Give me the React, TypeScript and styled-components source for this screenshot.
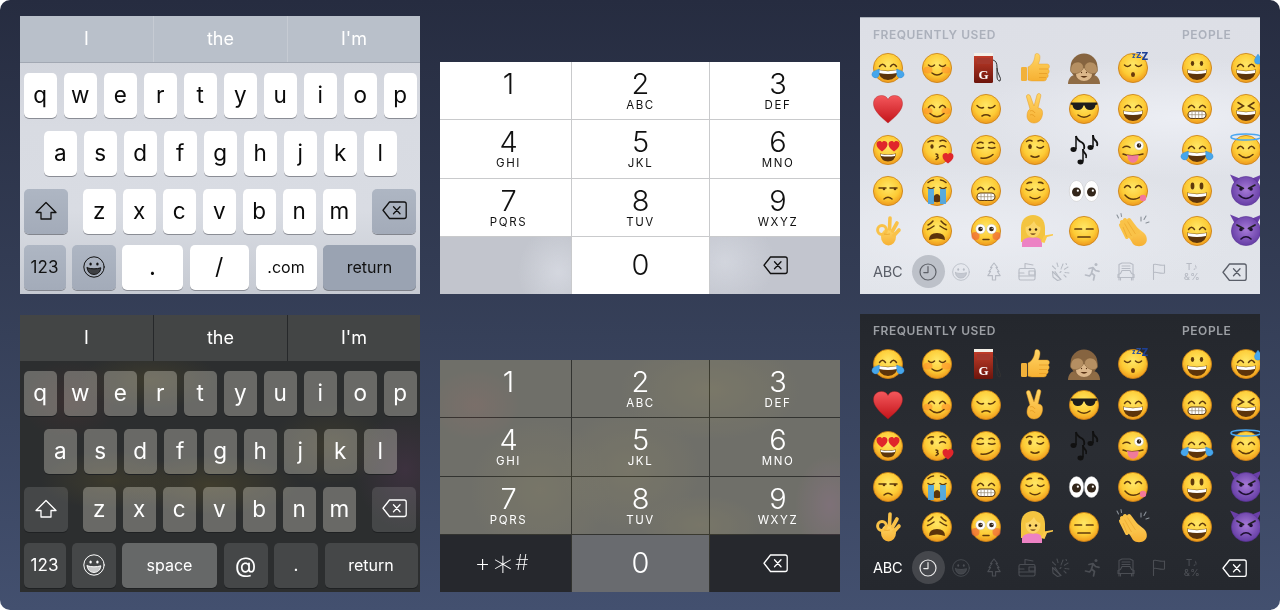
import React from 'react';
import styled, { createGlobalStyle } from 'styled-components';

const Global = createGlobalStyle`
  html, body { margin: 0; padding: 0; background: #fff; }
  body { font-family: Inter, "Liberation Sans", sans-serif; }
`;

const Page = styled.div`
  width: 1280px;
  height: 610px;
  box-sizing: border-box;
  border-radius: 10px;
  overflow: hidden;
  padding: 16px 20px 0;
  background: linear-gradient(180deg, #262c40 0%, #364059 55%, #43506f 100%);
  display: grid;
  grid-template-columns: 400px 400px 400px;
  grid-template-rows: 278px 277px;
  column-gap: 20px;
  row-gap: 21px;
`;

const Keyboard = styled.div<{ $dark?: boolean }>`
  display: flex;
  flex-direction: column;
  filter: blur(0.4px);
  background: ${p => p.$dark
    ? `radial-gradient(ellipse 50px 40px at 50px 85px, rgba(110,50,50,.2), transparent),
       radial-gradient(ellipse 70px 30px at 90px 165px, rgba(110,95,40,.25), transparent),
       radial-gradient(ellipse 90px 30px at 190px 170px, rgba(110,95,40,.3), transparent),
       radial-gradient(ellipse 50px 60px at 385px 155px, rgba(110,60,110,.25), transparent),
       radial-gradient(ellipse 70px 30px at 130px 65px, rgba(110,95,40,.25), transparent),
       radial-gradient(ellipse 60px 40px at 310px 130px, rgba(110,95,40,.22), transparent),
       #2c2e2f`
    : `linear-gradient(180deg, #ced1d9 0%, #d8dbe2 40%, #d9dce3 70%, #c6cad2 100%)`};
`;

const Suggestions = styled.div<{ $dark?: boolean }>`
  display: grid;
  grid-template-columns: 133px 134px 133px;
  height: ${p => (p.$dark ? 46 : 47)}px;
  box-sizing: border-box;
  border-bottom: ${p => (p.$dark ? 'none' : '1px solid #a2a8b3')};
  background: ${p => (p.$dark ? '#434545' : '#b9c0ca')};
`;

const Suggestion = styled.div<{ $dark?: boolean }>`
  display: flex;
  align-items: center;
  justify-content: center;
  font-size: 18px;
  padding-bottom: 1px;
  color: #fff;
  &:not(:first-child) { border-left: 1px solid ${p => (p.$dark ? '#26282a' : '#c6cbd3')}; }
`;

const Keys = styled.div`
  display: flex;
  flex-direction: column;
  gap: 13px;
  padding: 10px 4px 0 3.5px;
`;

const Row = styled.div<{ $indent?: number; $tight?: boolean }>`
  display: flex;
  height: 45px;
  gap: 6.5px;
  padding-left: ${p => p.$indent ?? 0}px;
  margin-top: ${p => (p.$tight ? -2 : 0)}px;
`;

const Key = styled.div<{ $w?: number; $tone: string; $size?: number; $after?: number; $push?: boolean }>`
  width: ${p => p.$w ?? 33.5}px;
  flex: none;
  height: 45px;
  box-sizing: border-box;
  border-radius: 5px;
  display: flex;
  align-items: center;
  justify-content: center;
  font-size: ${p => p.$size ?? 22.5}px;
  padding-bottom: 2px;
  margin-right: ${p => p.$after ?? 0}px;
  margin-left: ${p => (p.$push ? 'auto' : 0)};
  ${p => {
    switch (p.$tone) {
      case 'white': return 'background:#fff;color:#0a0a0a;box-shadow:0 1px 0 #8a8d95;';
      case 'gray': return 'background:linear-gradient(180deg,#aeb6c3,#a3abb9);color:#111;box-shadow:0 1px 0 #82858d;';
      case 'gray2': return 'background:#9aa3b2;color:#111;box-shadow:0 1px 0 #7d8088;';
      case 'dim': return 'background:rgba(255,252,238,.29);color:#fff;box-shadow:0 1px 0 #1f2123;';
      case 'dark': return 'background:rgba(255,255,255,.12);color:#fff;box-shadow:0 1px 0 #1f2123;';
      case 'space': return 'background:rgba(255,255,255,.28);color:#fff;box-shadow:0 1px 0 #1f2123;';
      default: return '';
    }
  }}
`;

const Numpad = styled.div<{ $dark?: boolean }>`
  align-self: end;
  height: 232px;
  filter: blur(0.4px);
  display: grid;
  grid-template-columns: 131px 137px 130px;
  grid-template-rows: repeat(4, 1fr);
  gap: 1px;
  background: ${p => p.$dark
    ? `radial-gradient(ellipse 45px 35px at 35px 45px, rgba(120,50,50,.22), transparent),
       radial-gradient(ellipse 70px 70px at 100px 130px, rgba(110,100,40,.2), transparent),
       radial-gradient(ellipse 90px 50px at 270px 30px, rgba(110,100,40,.24), transparent),
       radial-gradient(ellipse 70px 60px at 190px 110px, rgba(110,100,40,.2), transparent),
       radial-gradient(ellipse 35px 50px at 390px 145px, rgba(120,60,120,.3), transparent),
       radial-gradient(ellipse 60px 30px at 260px 165px, rgba(110,100,40,.2), transparent),
       #323330`
    : '#c9cacc'};
`;

const Pad = styled.div<{ $tone: string; $shift?: boolean; $center?: boolean }>`
  display: flex;
  flex-direction: column;
  align-items: center;
  box-sizing: border-box;
  justify-content: ${p => (p.$center ? 'center' : 'flex-start')};
  padding: ${p => (p.$center ? '0' : '6px')} 0 0 ${p => (p.$shift ? 6 : 0)}px;
  ${p => {
    switch (p.$tone) {
      case 'white': return 'background:#fff;color:#111;';
      case 'sideL': return 'background:radial-gradient(ellipse 40px 45px at 118px 35px,#d4d7df,transparent),#c2c5cd;color:#111;';
      case 'sideR': return 'background:radial-gradient(ellipse 50px 45px at 15px 25px,#d2d5dd,transparent),#c2c5ce;color:#111;';
      case 'dim': return 'background:rgba(255,252,238,.3);color:#fff;';
      case 'black': return 'background:#26282d;color:#fff;';
      case 'zero': return 'background:#696b6f;color:#fff;';
      default: return '';
    }
  }}
`;

const Digit = styled.div`
  font-size: 29px;
  line-height: 32px;
  font-weight: 340;
`;

const Letters = styled.div`
  font-size: 11.5px;
  line-height: 11px;
  letter-spacing: 1.6px;
`;

const Symbols = styled.div`
  display: flex;
  align-items: center;
  gap: 6px;
  margin-right: 8px;
  font-weight: 200;
  line-height: 24px;
`;

const Sym = styled.span<{ $size: number; $scale?: number; $font?: string }>`
  display: inline-block;
  font-size: ${p => p.$size}px;
  transform: scale(${p => p.$scale ?? 1});
  font-family: ${p => p.$font ?? 'Inter'}, sans-serif;
`;

const EmojiPanel = styled.div<{ $dark?: boolean }>`
  overflow: hidden;
  display: flex;
  flex-direction: column;
  filter: blur(0.4px);
  margin-top: ${p => (p.$dark ? -1 : 1)}px;
  height: ${p => (p.$dark ? 276 : 277)}px;
  border-top: ${p => (p.$dark ? 'none' : '1px solid #aab0ba')};
  box-sizing: border-box;
  background: ${p => p.$dark
    ? 'linear-gradient(180deg,#24272d 0%,#2a2d33 50%,#25282e 100%)'
    : 'radial-gradient(ellipse 220px 60px at 320px 100px,#eceef4,transparent),radial-gradient(ellipse 260px 70px at 120px 215px,#eaecf2,transparent),linear-gradient(180deg,#dddfe6 0%,#e1e4ea 100%)'};
`;

const tracks = 'repeat(5, 49px) 64px 49px 49px';

const SectionLabels = styled.div<{ $dark?: boolean }>`
  display: grid;
  grid-template-columns: ${tracks};
  padding: 9px 0 0 13px;
  height: 26px;
  box-sizing: border-box;
  font-size: 12px;
  line-height: 16px;
  font-weight: 600;
  letter-spacing: 0.55px;
  color: ${p => (p.$dark ? '#9c9fa4' : '#abb0bb')};
`;

const FirstLabel = styled.span`
  grid-column: span 6;
`;

const SecondLabel = styled.span`
  grid-column: span 2;
`;

const EmojiGrid = styled.div`
  display: grid;
  grid-template-columns: ${tracks};
  grid-auto-rows: 40.75px;
  padding: 4px 0 0 13px;
  align-items: center;
`;

const EmojiIcon = styled.svg`
  display: block;
  width: 30px;
  height: 30px;
  overflow: visible;
`;

const CategoryBar = styled.div<{ $dark?: boolean }>`
  display: flex;
  align-items: center;
  margin-top: 3px;
  padding: 0 13px;
  height: 34px;
  color: ${p => (p.$dark ? '#fff' : '#5a5e68')};
`;

const Abc = styled.div`
  width: 38.5px;
  flex: none;
  font-size: 14.5px;
  letter-spacing: -0.2px;
`;

const Category = styled.div<{ $dark?: boolean; $on?: boolean }>`
  width: 33px;
  height: 33px;
  flex: none;
  display: flex;
  align-items: center;
  justify-content: center;
  border-radius: 50%;
  box-sizing: border-box;
  color: ${p => (p.$on ? (p.$dark ? '#e8e8e8' : '#5e6168') : p.$dark ? '#4b4e54' : '#b7bbc4')};
  background: ${p => (p.$on ? (p.$dark ? '#45474c' : '#bdc1c9') : 'transparent')};
`;

const SymbolGlyph = styled.div`
  font-size: 9.5px;
  line-height: 9.5px;
  font-weight: 500;
  text-align: center;
  letter-spacing: 0.4px;
`;

const DeleteSlot = styled.div`
  margin-left: auto;
  display: flex;
`;

const Svg = styled.svg`
  display: block;
  fill: none;
  stroke: currentColor;
  stroke-linejoin: round;
  stroke-linecap: round;
`;

const Defs = styled.svg`
  display: block;
  width: 0;
  height: 0;
`;

const Del = () => (
  <Svg width={25} height={18.5} viewBox="0 0 25 18.5" strokeWidth={1.3}>
    <path d="M7.5 1h14.7a2 2 0 0 1 2 2v12.5a2 2 0 0 1-2 2H7.5L1 9.25z" />
    <path d="M11.5 5.7l6.5 7M18 5.7l-6.5 7" />
  </Svg>
);

const Shift = () => (
  <Svg width={22} height={20} viewBox="0 0 22 20" strokeWidth={1.3}>
    <path d="M11 1.500L21 11.500H16V18H6V11.500H1z" />
  </Svg>
);

const SmileyIcon = ({ d = 22 }: { d?: number }) => (
  <Svg width={d} height={d} viewBox="0 0 22 22" strokeWidth={1}>
    <circle cx="11" cy="11" r="10.2" />
    <ellipse cx="7.600" cy="8" rx="1.200" ry="1.600" fill="currentColor" stroke="none" />
    <ellipse cx="14.400" cy="8" rx="1.200" ry="1.600" fill="currentColor" stroke="none" />
    <path d="M4.200 11.800c4 1.400 9.600 1.400 13.600 0c-.4 4.600-3.400 6.600-6.800 6.600s-6.400-2-6.800-6.600z" fill="currentColor" fillOpacity=".7" />
  </Svg>
);

const CatIcon: Record<string, React.ReactNode> = {
  clock: (
    <Svg width={18} height={18} viewBox="0 0 18 18" strokeWidth={1.2}>
      <circle cx="9" cy="9" r="8" />
      <path d="M9 3.500V9.600H4.800" />
    </Svg>
  ),
  smile: <SmileyIcon d={18} />,
  tree: (
    <Svg width={14} height={19} viewBox="0 0 14 19" strokeWidth={1.1}>
      <path d="M7 1L10.500 5.500H9L12 9.500H10.400L13.200 13.600H8.600V18H5.400V13.600H.8L3.600 9.500H2L5 5.500H3.500z" />
    </Svg>
  ),
  cable: (
    <Svg width={18} height={19} viewBox="0 0 18 19" strokeWidth={1.1}>
      <path d="M7 6.500V1.500L15 3" />
      <rect x="1" y="6.500" width="16" height="11.500" rx="1.500" />
      <path d="M1 11h5M11 9h6v4h-6z" />
      <path d="M1 14h16" />
    </Svg>
  ),
  party: (
    <Svg width={19} height={19} viewBox="0 0 19 19" strokeWidth={1.1}>
      <path d="M1.500 9.500l8.500 8L6.500 18.500 2 15z" />
      <path d="M4 9.500l5.500 8M1.500 4l3 3M6 1l1 3.500M12 2l-2 5M17 5l-4 2.500M18 11l-4-.5M15 15l-2-2M15 1.500l.5 1M9 10.500l1-1" strokeDasharray="1.600 1" />
    </Svg>
  ),
  run: (
    <Svg width={18} height={19} viewBox="0 0 18 19" strokeWidth={1.7}>
      <circle cx="12" cy="2.500" r="1.500" fill="currentColor" stroke="none" />
      <path d="M5 6.500l4-1 2.500 3 3.500.8M9 6l-1.500 5 3 2.500-1 4.500M7.500 11.500L5.500 14 1.500 13" />
    </Svg>
  ),
  car: (
    <Svg width={18} height={19} viewBox="0 0 18 19" strokeWidth={1.1}>
      <path d="M2 18V2.500L5 1h8l3 1.500V18" />
      <path d="M5 4h8M5 6.500h8" />
      <path d="M1 15.500v-3l2.500-1 1.500-3h8l1.500 3 2.500 1v3z" />
      <path d="M3.500 15.500V18M14.500 15.500V18" />
    </Svg>
  ),
  flag: (
    <Svg width={14} height={17} viewBox="0 0 14 17" strokeWidth={1.1}>
      <path d="M1.500 16.500V1.500c3.500-1 6 1.500 11 .5V10c-5 1-7.500-1.500-11-.5" />
    </Svg>
  ),
};

const Face: React.FC<{ children?: React.ReactNode }> = ({ children }) => (
  <>
    <circle cx="15" cy="15" r="14.600" fill="url(#fg)" stroke="#c97f14" strokeWidth=".8" />
    {children}
  </>
);

const BR = '#5f3a0c';
const line = { fill: 'none', stroke: BR, strokeWidth: 1.5, strokeLinecap: 'round' as const };
const eyesUp = <path {...line} d="M6.500 13.500q3-4.500 6 0M17.500 13.500q3-4.500 6 0" />;
const eyesClosed = <path {...line} d="M6.500 12q3 3 6 0M17.500 12q3 3 6 0" />;
const eyesSad = <path {...line} d="M6 11.500q3 3.500 6.500 2M24 11.500q-3 3.500-6.500 2" />;
const eyesDots = (
  <>
    <ellipse cx="10.500" cy="10.500" rx="1.700" ry="2.400" fill={BR} />
    <ellipse cx="19.500" cy="10.500" rx="1.700" ry="2.400" fill={BR} />
  </>
);
const eyesTall = (
  <>
    <ellipse cx="10.500" cy="10" rx="1.900" ry="3.400" fill={BR} />
    <ellipse cx="19.500" cy="10" rx="1.900" ry="3.400" fill={BR} />
  </>
);
const bigMouth = (
  <>
    <path d="M5 16.500q10 2.500 20 0q-.8 10.500-10 10.500T5 16.500z" fill="#5c340b" />
    <path d="M5.600 17q9.400 2.300 18.800 0l-.5 3q-8.900 1.800-17.800 0z" fill="#fff" />
  </>
);
const smile = <path {...line} d="M8 19.500q7 6.500 14 0" />;
const blush = (
  <>
    <ellipse cx="6" cy="17" rx="4.500" ry="3.500" fill="#ff8a2a" opacity=".55" />
    <ellipse cx="24" cy="17" rx="4.500" ry="3.500" fill="#ff8a2a" opacity=".55" />
  </>
);
const teeth = (
  <>
    <rect x="6" y="17" width="18" height="7.500" rx="3.700" fill="#fff" stroke={BR} strokeWidth="1.100" />
    <path d="M6.500 20.700h17M10 17.300v7M13.300 17.200v7.200M16.700 17.200v7.200M20 17.300v7" stroke="#9a8a70" strokeWidth=".7" />
  </>
);
const tear = (x: number, y: number, r = 0) => (
  <path transform={`translate(${x} ${y}) rotate(${r})`} d="M0-5c2.500 3.500 3.600 5 3.600 6.600a3.600 3.600 0 0 1-7.200 0C-3.600 0-2.500-1.500 0-5z" fill="#46a6ec" stroke="#2f85c9" strokeWidth=".3" />
);
const miniHeart = (x: number, y: number, s = 1) => (
  <path transform={`translate(${x} ${y}) scale(${s})`} d="M0 5C-3 3-5 1-5-1.500-5-3.500-3.500-4.500-2-4.500-1-4.500-.4-4 0-3.200.4-4 1-4.500 2-4.500 3.500-4.500 5-3.500 5-1.500 5 1 3 3 0 5z" fill="#e0262b" />
);
const whiteEye = (x: number, y: number, rx: number, ry: number, pr: number, py = 0) => (
  <>
    <ellipse cx={x} cy={y} rx={rx} ry={ry} fill="#fff" stroke="#b5b5b5" strokeWidth=".4" />
    <circle cx={x} cy={y + py} r={pr} fill="#33261a" />
    <circle cx={x + pr * .3} cy={y + py - pr * .3} r={pr * .25} fill="#fff" />
  </>
);
const skinHand = { fill: 'url(#sk)', stroke: '#e49a22', strokeWidth: .5 };
const finger = { stroke: '#f9c248', strokeLinecap: 'round' as const, fill: 'none' };
const purple = (children: React.ReactNode) => (
  <>
    <path d="M3.500 7L-1 -1.500 10 3zM26.500 7L31 -1.500 20 3z" fill="#6a3fa8" />
    <circle cx="15" cy="15" r="14.600" fill="url(#pg)" stroke="#5b3395" strokeWidth=".6" />
    {children}
  </>
);

const E: Record<string, React.ReactNode> = {
  joy: <Face>{eyesUp}{bigMouth}{tear(3.500, 20, 35)}{tear(26.500, 20, -35)}</Face>,
  relaxed: <Face>{blush}{eyesClosed}<path {...line} d="M10 20q5 4 10 0" /></Face>,
  fuel: (
    <>
      <rect x="3" y="0" width="19" height="30" rx="1.500" fill="url(#fuel)" />
      <rect x="3" y="0" width="19" height="3" fill="#f4f0e8" />
      <rect x="6" y="5" width="13" height="6" fill="#a5382c" />
      <text x="12.500" y="25.500" fontSize="13" fontWeight="700" fill="#fff" textAnchor="middle" fontFamily="Liberation Serif, serif">G</text>
      <path d="M22 7q4 1 4 7v9q0 5 3 5 1.500-2-1-6-2-4-2-7" fill="none" stroke="#333" strokeWidth="1" />
    </>
  ),
  thumb: (
    <>
      <rect x="1" y="14" width="6" height="14" rx="1.200" fill="#f2b13a" />
      <path d="M8 14c4-2 6.500-6 7-12 .2-2.500 5-2 5 2 0 3-1 5-1.500 7H27c3 0 3 4 1 5 1.800 1 1.500 4-.2 5 1 1.500.3 3.500-1.300 4 .3 2-1 3-3 3H12c-2 0-4-1-4-1z" fill="url(#sk)" stroke="#e49a22" strokeWidth=".4" />
      <path d="M19 16h9M19 20.500h8M19 24.500h7" stroke="#e49a22" strokeWidth=".7" />
    </>
  ),
  monkey: (
    <>
      <path d="M-1 31c0-5 3-9 7-9h18c4 0 7 4 7 9z" fill="#8f6c45" />
      <circle cx="15" cy="14" r="13.500" fill="#866440" />
      <ellipse cx="15" cy="21.500" rx="8" ry="6.500" fill="#dcb78a" />
      <path d="M11.500 23q3.500 3.500 7 0z" fill="#5a3415" />
      <circle cx="12.500" cy="19.500" r=".7" fill="#5a3415" />
      <circle cx="17.500" cy="19.500" r=".7" fill="#5a3415" />
      <path d="M1.500 18c0-6 3-9 7.500-9 3 0 5.500 2.500 5.500 5s-1.500 3-3 4.500C9 21 3.500 22 1.500 18zM28.500 18c0-6-3-9-7.500-9-3 0-5.500 2.500-5.500 5s1.500 3 3 4.500c2.500 2.500 8 3.500 10-.5z" fill="#b58f62" stroke="#7c5c36" strokeWidth=".5" />
    </>
  ),
  sleep: (
    <Face>
      {eyesClosed}
      <ellipse cx="15" cy="21.500" rx="2" ry="2.500" fill="#6a3a0c" />
      <text x="14" y="5" fontSize="6" fontWeight="800" fill="#2a4fa0" fontFamily="Inter, sans-serif">z</text>
      <text x="18" y="5" fontSize="8" fontWeight="800" fill="#2a4fa0" fontFamily="Inter, sans-serif">Z</text>
      <text x="23.500" y="7" fontSize="10" fontWeight="800" fill="#1d3f94" fontFamily="Inter, sans-serif">Z</text>
    </Face>
  ),
  grin: <Face>{eyesDots}{bigMouth}</Face>,
  sweat: <Face>{eyesUp}{bigMouth}{tear(27, 6)}</Face>,
  heart: <path d="M15 29C5.500 21 .5 15.500.5 9.500.5 4.500 4 1.500 8.500 1.500c3 0 5.500 1.500 6.500 4 1-2.500 3.500-4 6.500-4 4.500 0 8 3 8 8C29.500 15.500 24.500 21 15 29z" fill="url(#hg)" stroke="#a81818" strokeWidth=".4" />,
  smile: <Face>{blush}{eyesUp}{smile}</Face>,
  pensive: <Face>{eyesSad}<path {...line} d="M11 22q4-2.500 8 0" /></Face>,
  victory: (
    <>
      <path d="M10 15L6.500 3c-.7-2.500 3-3.500 3.800-1L14 12l3-11c.7-2.500 4.500-1.500 3.800 1L18 14c3 0 5 2 4.500 6-.5 5-3.500 9-8.500 9-4 0-7-3-7-7 0-3 1-6 3-7z" {...skinHand} />
      <path d="M10 17c2-1 4 0 5 2M10 21c2-1 4 0 5 2" stroke="#e49a22" strokeWidth=".8" fill="none" />
    </>
  ),
  shades: (
    <Face>
      <path d="M2 8.500h26l.5 2-2 .5c-.5 4-3 5-5.500 5-3 0-5-2-5.500-4.500h-1c-.5 2.500-2.500 4.500-5.500 4.500-2.500 0-5-1-5.500-5l-2-.5z" fill="#1d1d1d" />
      <path {...line} d="M9 21q6 4.500 12 0" />
    </Face>
  ),
  smileOpen: <Face>{eyesUp}{bigMouth}</Face>,
  grimace: <Face>{eyesUp}{teeth}</Face>,
  laugh: <Face><path {...line} d="M7 8.500l5.500 3.500-5.500 3M23 8.500l-5.500 3.500 5.500 3" />{bigMouth}</Face>,
  hearts: <Face>{miniHeart(9, 11, 1.100)}{miniHeart(21, 11, 1.100)}<path d="M7 18.500q8 2 16 0q-1 8-8 8t-8-8z" fill="#5c340b" /><path d="M7.600 19q7.400 1.700 14.800 0l-.4 2q-7 1.200-14 0z" fill="#fff" /></Face>,
  kiss: (
    <Face>
      <path {...line} d="M6 7q3-2 5.500-1M18 6q3-1.500 6 .5" />
      <ellipse cx="10" cy="11.500" rx="1.600" ry="2.200" fill={BR} />
      <path {...line} d="M17.500 12q3-2.500 6 0" />
      <path {...line} d="M14 19q3 .5 1 2.500q3 1 -1 3" />
      {miniHeart(26, 23, 1.100)}
    </Face>
  ),
  smirk: (
    <Face>
      <path {...line} d="M6 12.500q3.500 1.500 6.500 0M17.500 12.500q3.500 1.500 6.500 0M6.500 8.500q3-2 5.500-.5M18 8q3-1.500 5.500.5" />
      <path {...line} d="M10 23q7 1 12-3.500" />
    </Face>
  ),
  wink: (
    <Face>
      <ellipse cx="10" cy="11.500" rx="1.800" ry="2.600" fill={BR} />
      <path {...line} d="M17 12q3.500 2.500 6.500-.5M6.500 6.500q3-2 5.500-.5M18 6q3-1.500 5.500.5" />
      <path {...line} d="M11 21q4 2.500 8 0" />
    </Face>
  ),
  music: (
    <g fill="#111" stroke="#111">
      <path d="M7 1q1 4 6 6.500q3 2 2 6.500" strokeWidth="1.800" fill="none" />
      <path d="M7 1V14" strokeWidth="1.500" />
      <ellipse cx="4.500" cy="14.500" rx="3" ry="2.400" stroke="none" />
      <path d="M24 0q0 4 3 6q2 2 1 5" strokeWidth="1.800" fill="none" />
      <path d="M24 0V12" strokeWidth="1.500" />
      <ellipse cx="21.500" cy="12.500" rx="3" ry="2.400" stroke="none" />
      <path d="M14 14q0 3 2.500 5q1.500 1.500 .5 4" strokeWidth="1.800" fill="none" />
      <path d="M14 14V26.500" strokeWidth="1.500" />
      <ellipse cx="11.500" cy="27" rx="3" ry="2.400" stroke="none" />
    </g>
  ),
  tongue: (
    <Face>
      <path {...line} d="M5 12.500q3.500-2.500 7 0" />
      {whiteEye(21, 10.500, 4.500, 4.500, 2.200)}
      <path {...line} d="M5 19q8 3.500 20 0" />
      <path d="M8 19.500q4 1.500 13 .5L20.500 21c0 9-11 9-11 0z" fill="#f07a9b" />
    </Face>
  ),
  unamused: (
    <Face>
      <path {...line} d="M6 12h7M17 12h7" />
      <circle cx="11" cy="13" r="1.300" fill={BR} />
      <circle cx="22" cy="13" r="1.300" fill={BR} />
      <path {...line} d="M11 23q4-3.500 8 0" />
    </Face>
  ),
  sob: (
    <Face>
      <path {...line} d="M6 11.500q3 2.500 6 0M18 11.500q3 2.500 6 0M6 6.500q3-2.500 5.500-2.500M24 6.500q-3-2.500-5.500-2.500" />
      <path d="M11 24a4 6 0 0 1 8 0c0 3-8 3-8 0z" fill="#5c340b" />
      <path d="M6 13h6v15H6zM18 13h6v15h-6z" fill="#46a6ec" opacity=".9" />
    </Face>
  ),
  relieved: <Face><path {...line} d="M6 13q3 3 6.500 0M17.500 13q3 3 6.500 0M7 7.500q2-1.500 4.500-1M18.500 6.500q3-.5 4.500 1" /><path {...line} d="M10 21q5 3.500 10 0" /></Face>,
  eyes: <>{whiteEye(7.500, 15, 7.200, 10.500, 4.500, 1)}{whiteEye(22.500, 15, 7.200, 10.500, 4.500, 1)}</>,
  yum: (
    <Face>
      <path {...line} d="M6.500 11.500q3-4 6 0M17.500 11.500q3-4 6 0M7 19q7 8 17 1" />
      <ellipse cx="25" cy="22" rx="3.200" ry="3.200" fill="#f4789a" />
    </Face>
  ),
  smiley: <Face>{eyesTall}{bigMouth}</Face>,
  imp: purple(
    <>
      <path d="M6 9l6.500 3.500M24 9l-6.500 3.500" stroke="#222" strokeWidth="1.500" strokeLinecap="round" />
      <circle cx="10" cy="13" r="1.800" fill="#1d1030" />
      <circle cx="20" cy="13" r="1.800" fill="#1d1030" />
      <path d="M8 19q7 7 14 0" fill="none" stroke="#1d1030" strokeWidth="1.600" strokeLinecap="round" />
    </>
  ),
  angry: purple(
    <>
      <path d="M6 9l6.500 3.500M24 9l-6.500 3.500" stroke="#222" strokeWidth="1.700" strokeLinecap="round" />
      <circle cx="10" cy="13.500" r="1.800" fill="#1d1030" />
      <circle cx="20" cy="13.500" r="1.800" fill="#1d1030" />
      <path d="M10 23q5-4.500 10 0" fill="none" stroke="#1d1030" strokeWidth="1.600" strokeLinecap="round" />
    </>
  ),
  ok: (
    <>
      <ellipse cx="15.500" cy="21" rx="7.500" ry="8.500" fill="url(#sk)" />
      <path d="M16.500 13L17 2" {...finger} strokeWidth="3.600" />
      <path d="M19.500 15L24 7" {...finger} strokeWidth="3.600" />
      <path d="M21 19.500L26 14" {...finger} strokeWidth="3.600" />
      <circle cx="9" cy="14" r="4.400" fill="none" stroke="#f9c248" strokeWidth="3" />
      <path d="M11 18q3 1 6 0" stroke="#e49a22" strokeWidth=".6" fill="none" />
    </>
  ),
  weary: (
    <Face>
      <path {...line} d="M5.500 13.500q3-1 6.500-3.500M24.500 13.500q-3-1-6.500-3.500M6 9q3-1.500 5-4M24 9q-3-1.500-5-4" />
      <path d="M7 24q0-7 8-7t8 7q-8-3-16 0z" fill="#5c340b" />
    </Face>
  ),
  flushed: (
    <Face>
      <ellipse cx="4.500" cy="20" rx="4" ry="4" fill="#f06a3a" opacity=".7" />
      <ellipse cx="25.500" cy="20" rx="4" ry="4" fill="#f06a3a" opacity=".7" />
      {whiteEye(9.500, 13, 4.800, 4.800, 2.300)}
      {whiteEye(20.500, 13, 4.800, 4.800, 2.300)}
      <path {...line} d="M12 23.500h6" />
    </Face>
  ),
  girl: (
    <>
      <path d="M1 26V12C1 4 6 -1 13 -1S25 4 25 12v14z" fill="#f3c440" />
      <path d="M2 31v-4c0-3 3-5 7-5.500h8c3 .5 5 2.500 5 5.500v4z" fill="#ec82c4" />
      <path d="M21 26l3-6.500 9-1.500v1.500l-6 1.500-2.500 6z" fill="#fbc94a" />
      <ellipse cx="13" cy="13" rx="7.500" ry="8.500" fill="#fbd566" />
      <path d="M6 11q5-1 8-6 2 5 6 6V4H6z" fill="#f3c440" />
      <circle cx="10" cy="13.500" r="1.200" fill="#3a240c" />
      <circle cx="16" cy="13.500" r="1.200" fill="#3a240c" />
      <path d="M10 17.500q3 2.500 6 0z" fill="#5a2a0c" />
    </>
  ),
  flat: <Face><path {...line} d="M6 13h6.500M17.500 13h6.500M9 21h12" strokeWidth="1.700" /></Face>,
  clap: (
    <>
      <path d="M2 6.500L11 5 26 17c3 3 4 8 1 11s-9 3-12 0z" fill="url(#sk)" />
      <path d="M9 21L3 9M13 21L4 6M17 19L7 4M20 16L11 4" {...finger} strokeWidth="4" />
      <path d="M9 21L5 11M13.500 20L6.500 7.500M17.500 18L9.500 5.500" stroke="#e49a22" strokeWidth=".5" fill="none" />
      <path d="M-1 -1l1.500 3M3 -2.500l.5 3M23 1v4M28 0l-2 3.500M31 6l-3 1" stroke="#8a9199" strokeWidth="1.100" strokeLinecap="round" />
    </>
  ),
  halo: (
    <Face>
      {eyesUp}
      {smile}
      <ellipse cx="15" cy="2" rx="15" ry="3" fill="none" stroke="#4aa6f0" strokeWidth="1.500" />
    </Face>
  ),
};

const emojiRows = [
  ['joy', 'relaxed', 'fuel', 'thumb', 'monkey', 'sleep', 'grin', 'sweat'],
  ['heart', 'smile', 'pensive', 'victory', 'shades', 'smileOpen', 'grimace', 'laugh'],
  ['hearts', 'kiss', 'smirk', 'wink', 'music', 'tongue', 'joy', 'halo'],
  ['unamused', 'sob', 'grimace', 'relieved', 'eyes', 'yum', 'smiley', 'imp'],
  ['ok', 'weary', 'flushed', 'girl', 'flat', 'clap', 'smileOpen', 'angry'],
];

const letterRows = ['qwertyuiop', 'asdfghjkl', 'zxcvbnm'];

const pad = [
  ['1', ''], ['2', 'ABC'], ['3', 'DEF'],
  ['4', 'GHI'], ['5', 'JKL'], ['6', 'MNO'],
  ['7', 'PQRS'], ['8', 'TUV'], ['9', 'WXYZ'],
];

const Kb: React.FC<{ dark?: boolean }> = ({ dark }) => {
  const tone = dark ? 'dim' : 'white';
  const sp = dark ? 'dark' : 'gray';
  return (
    <Keyboard $dark={dark}>
      <Suggestions $dark={dark}>
        {['I', 'the', "I'm"].map(w => <Suggestion key={w} $dark={dark}>{w}</Suggestion>)}
      </Suggestions>
      <Keys>
        <Row>{letterRows[0].split('').map(c => <Key key={c} $tone={tone}>{c}</Key>)}</Row>
        <Row $indent={20}>{letterRows[1].split('').map(c => <Key key={c} $tone={tone}>{c}</Key>)}</Row>
        <Row>
          <Key $tone={sp} $w={44} $after={8.5}><Shift /></Key>
          {letterRows[2].split('').map(c => <Key key={c} $tone={tone}>{c}</Key>)}
          <Key $tone={sp} $w={44} $push><Del /></Key>
        </Row>
        <Row $tight>
          <Key $tone={sp} $w={42} $size={17}>123</Key>
          <Key $tone={sp} $w={43.5}><SmileyIcon /></Key>
          {dark ? (
            <>
              <Key $tone="space" $w={95} $size={16}>space</Key>
              <Key $tone="dark" $w={44} $size={22}>@</Key>
              <Key $tone="dark" $w={44} $size={17}>.</Key>
            </>
          ) : (
            <>
              <Key $tone="white" $w={61} $size={24}>.</Key>
              <Key $tone="white" $w={59.5} $size={23}>/</Key>
              <Key $tone="white" $w={61} $size={16}>.com</Key>
            </>
          )}
          <Key $tone={dark ? 'dark' : 'gray2'} $w={93} $size={16}>return</Key>
        </Row>
      </Keys>
    </Keyboard>
  );
};

const Numbers: React.FC<{ dark?: boolean }> = ({ dark }) => (
  <Numpad $dark={dark}>
    {pad.map(([n, l], i) => (
      <Pad key={n} $tone={dark ? 'dim' : 'white'} $shift={i % 3 !== 1}>
        <Digit>{n}</Digit>
        <Letters>{l}</Letters>
      </Pad>
    ))}
    <Pad $tone={dark ? 'black' : 'sideL'} $center>
      {dark && (
        <Symbols>
          <Sym $size={25}>+</Sym>
          <Sym $size={20} $scale={1.9} $font="DejaVu Sans">∗</Sym>
          <Sym $size={21}>#</Sym>
        </Symbols>
      )}
    </Pad>
    <Pad $tone={dark ? 'zero' : 'white'} $center><Digit>0</Digit></Pad>
    <Pad $tone={dark ? 'black' : 'sideR'} $center><Del /></Pad>
  </Numpad>
);

const Emojis: React.FC<{ dark?: boolean }> = ({ dark }) => (
  <EmojiPanel $dark={dark}>
    <SectionLabels $dark={dark}>
      <FirstLabel>FREQUENTLY USED</FirstLabel>
      <SecondLabel>PEOPLE</SecondLabel>
    </SectionLabels>
    <EmojiGrid>
      {emojiRows.flat().map((k, i) => (
        <EmojiIcon key={i} viewBox="0 0 30 30">{E[k]}</EmojiIcon>
      ))}
    </EmojiGrid>
    <CategoryBar $dark={dark}>
      <Abc>ABC</Abc>
      <Category $dark={dark} $on>{CatIcon.clock}</Category>
      {['smile', 'tree', 'cable', 'party', 'run', 'car', 'flag'].map(k => (
        <Category key={k} $dark={dark}>{CatIcon[k]}</Category>
      ))}
      <Category $dark={dark}><SymbolGlyph>T♪<br />&amp;%</SymbolGlyph></Category>
      <DeleteSlot><Del /></DeleteSlot>
    </CategoryBar>
  </EmojiPanel>
);

export default function App() {
  return (
    <>
      <Global />
      <Defs>
        <defs>
          <radialGradient id="fg" cx="50%" cy="38%" r="60%">
            <stop offset="0%" stopColor="#ffe766" />
            <stop offset="65%" stopColor="#fdcb35" />
            <stop offset="100%" stopColor="#ef9c1e" />
          </radialGradient>
          <radialGradient id="pg" cx="50%" cy="45%" r="60%">
            <stop offset="0%" stopColor="#a77ad8" />
            <stop offset="100%" stopColor="#5f38a0" />
          </radialGradient>
          <linearGradient id="hg" x1="0" y1="0" x2="0" y2="1">
            <stop offset="0%" stopColor="#f4585c" />
            <stop offset="100%" stopColor="#c4141a" />
          </linearGradient>
          <linearGradient id="sk" x1="0" y1="0" x2="0" y2="1">
            <stop offset="0%" stopColor="#ffd667" />
            <stop offset="100%" stopColor="#f6b032" />
          </linearGradient>
          <linearGradient id="fuel" x1="0" y1="0" x2="0" y2="1">
            <stop offset="0%" stopColor="#c9402c" />
            <stop offset="100%" stopColor="#6d150c" />
          </linearGradient>
        </defs>
      </Defs>
      <Page>
        <Kb />
        <Numbers />
        <Emojis />
        <Kb dark />
        <Numbers dark />
        <Emojis dark />
      </Page>
    </>
  );
}
